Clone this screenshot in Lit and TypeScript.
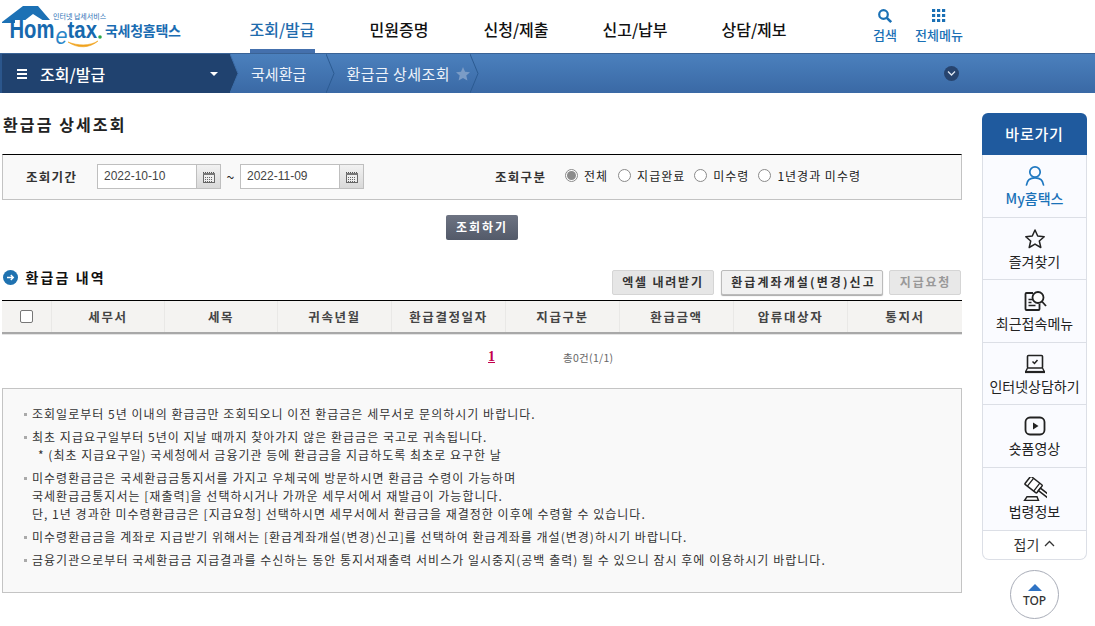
import { LitElement, html, css, svg } from "lit";
import { customElement } from "lit/decorators.js";

const calIcon = html`<svg width="14" height="14" viewBox="0 0 14 14"><path d="M1 2.500h12" stroke="#555" stroke-dasharray="1 1" fill="none"/><rect x="1.500" y="3.500" width="11" height="9" fill="#eee" stroke="#666"/><rect x="1" y="3" width="12" height="2" fill="#777"/><path d="M3 7.500h8M3 9.500h8M3 11.500h8" stroke="#666" stroke-dasharray="1 1" fill="none"/></svg>`;

const icons: Record<string, unknown> = {
  user: svg`<circle cx="12" cy="8" r="5.200" fill="none" stroke="#1f78c1" stroke-width="1.700"/><path d="M3.500 21c.5-5 4-7.200 8.500-7.200s8 2.200 8.500 7.200" fill="none" stroke="#1f78c1" stroke-width="1.700" stroke-linecap="round"/>`,
  star: svg`<path d="M12 3l2.700 6 6.500.7-4.900 4.300 1.500 6.500L12 17.100 6.200 20.500l1.500-6.500L2.800 9.700 9.300 9z" fill="none" stroke="#222" stroke-width="1.500" stroke-linejoin="round"/>`,
  recent: svg`<path d="M10 4H3.500a1 1 0 0 0-1 1v15a1 1 0 0 0 1 1h12a1 1 0 0 0 1-1v-5" fill="none" stroke="#222" stroke-width="1.800"/><path d="M5.500 10.500h4.500M5.500 13.500h3M5.500 16.500h7" stroke="#222" stroke-width="1.600"/><circle cx="15" cy="8.500" r="5.500" fill="#fff" stroke="#222" stroke-width="1.800"/><path d="M19 12.500l4 4.500" stroke="#222" stroke-width="1.800"/>`,
  laptop: svg`<rect x="4.500" y="3.500" width="15" height="12.500" rx="1" fill="none" stroke="#222" stroke-width="1.600"/><path d="M2 20h20" stroke="#222" stroke-width="2.200"/><path d="M4.500 16L2.500 20M19.500 16L21.500 20" stroke="#222" stroke-width="1.400"/><path d="M9.500 9.500l2 2 3-3.500" fill="none" stroke="#222" stroke-width="1.500"/>`,
  play: svg`<rect x="2.500" y="3.500" width="19" height="17" rx="4.500" fill="none" stroke="#222" stroke-width="1.800"/><path d="M10 8.500l5.500 3.500-5.500 3.500z" fill="#222"/>`,
  gavel: svg`<g transform="rotate(38 11 8)"><rect x="3" y="3" width="15" height="10" rx="1" fill="#fff" stroke="#222" stroke-width="1.500"/><path d="M6.500 3v10M14.500 3v10" stroke="#222" stroke-width="1.300"/><path d="M18 6.500h12v3.200H18z" fill="#fff" stroke="#222" stroke-width="1.500"/></g><path d="M1.500 23.500h14l-1.500-3.800H4z" fill="#fff" stroke="#222" stroke-width="1.500"/>`,
};

@customElement("app-root")
export class AppRoot extends LitElement {
  static styles = css`
    :host { display: block; width: 1095px; height: 626px; overflow: hidden; background: #fff; color: #222;
      font-family: "Noto Sans CJK KR", "Liberation Sans", sans-serif; font-size: 12px; }
    * { box-sizing: border-box; }
    .head { display: flex; height: 53px; align-items: stretch; }
    .logo { width: 223.500px; flex: none; }
    .logo svg { display: block; }
    .l-en { font-family: "Liberation Sans", sans-serif; font-weight: 700; fill: #1769ae; }
    .l-e { font-family: "Liberation Sans", sans-serif; font-style: italic; fill: #2b86c8; }
    .l-small { font-size: 7px; fill: #2a6fb5; font-family: "Noto Sans CJK KR", sans-serif; }
    .l-ko { font-size: 14px; font-weight: 700; fill: #1a6cb2; font-family: "Noto Sans CJK KR", sans-serif; }
    .nav { display: flex; width: 623.500px; flex: none; }
    .nav a { width: 117px; display: flex; align-items: flex-start; justify-content: center; padding-top: 16px; font-size: 16px; line-height: 26px; font-weight: 500; color: #111; position: relative; }
    .nav a.on { color: #1f6cad; }
    .nav a.on::after { content: ""; position: absolute; left: 26px; width: 65px; bottom: 0; height: 4px; background: #4470ad; }
    .nav a.wide { margin-left: 2px; }
    .tools { display: flex; }
    .tool { display: flex; flex-direction: column; align-items: center; color: #1a70b5; font-size: 13px; font-weight: 500; line-height: 18px; padding-top: 8px; }
    .tool svg { display: block; height: 16px; margin-bottom: 2px; }
    .t1 { width: 24px; margin-left: 26px; }
    .t2 { width: 48px; margin-left: 18px; }
    .crumb { height: 40px; display: flex; align-items: center; background: linear-gradient(#4b80bd, #3a69a5); color: #fff; border-top: 1px solid #3a6396; position: relative; }
    .c-main { width: 230px; height: 39px; background: #20426f; border-left: 2px solid #2b568c; display: flex; align-items: center; padding-left: 15px; font-size: 16px; font-weight: 500; position: relative; flex: none; }
    .ham { width: 10px; height: 10px; border-top: 2px solid #fff; border-bottom: 2px solid #fff; position: relative; margin-right: 13px; }
    .ham::after { content: ""; position: absolute; left: 0; right: 0; top: 2px; height: 2px; background: #fff; }
    .caret { position: absolute; left: 208px; top: 18px; width: 0; height: 0; border: 4px solid transparent; border-top: 4px solid #fff; border-bottom: 0; }
    .chev { position: absolute; top: 0; width: 9px; height: 39px; }
    .c-item { font-size: 15px; color: #eef3fa; line-height: 20px; flex: none; letter-spacing: .05px; }
    .c1 { margin-left: 21px; }
    .c2 { margin-left: 40px; letter-spacing: .45px; }
    .c-star { margin-left: 6px; display: block; }
    .c-down { position: absolute; left: 944px; top: 12px; width: 15px; height: 15px; border-radius: 50%; background: #27446e; display: flex; align-items: center; justify-content: center; }
    .body { display: flex; padding: 0 0 0 2px; gap: 20px; }
    main { width: 960px; flex: none; padding-top: 20px; }
    h1 { margin: 0; padding-left: 1px; font-size: 16px; line-height: 22px; font-weight: 700; letter-spacing: 2.100px; color: #222; }
    .search { margin-top: 19px; height: 46px; background: #f9f9f9; border: 1px solid #c3c3c3; border-top: 1px solid #000; display: flex; align-items: center; padding: 0 0 1px 23px; position: relative; }
    .lbl { font-weight: 700; font-size: 12.500px; letter-spacing: 1.300px; color: #333; width: 71px; flex: none; }
    .date { display: flex; height: 25px; flex: none; }
    .date .v { width: 99px; background: #fff; border: 1px solid #bfbfbf; border-right: 0; padding-left: 6px; line-height: 22px; font-family: "Liberation Sans", sans-serif; color: #444; }
    .date .b { width: 25px; border: 1px solid #bfbfbf; background: linear-gradient(#f2f2f2, #d9d9d9); display: flex; align-items: center; justify-content: center; }
    .tilde { width: 19px; text-align: center; font-size: 14px; flex: none; }
    .l2 { margin-left: 131px; }
    .radio { display: flex; align-items: center; margin-left: 0; color: #222; font-size: 12px; letter-spacing: 1px; flex: none; line-height: 18px; margin-top: -2px; }
    .radio i { width: 13px; height: 13px; border: 1px solid #8a8a8a; border-radius: 50%; background: #fff; margin-right: 6px; display: flex; align-items: center; justify-content: center; flex: none; }
    .radio i.on::after { content: ""; width: 9px; height: 9px; border-radius: 50%; background: #8b8b8b; }
    .btnrow { margin-top: 15px; display: flex; justify-content: center; }
    .go { width: 72px; height: 25px; background: linear-gradient(#6d7382, #535a69); color: #fff; font-weight: 700; font-size: 12px; letter-spacing: 1.900px; border-radius: 2px; text-align: center; line-height: 23px; }
    .sec { margin-top: 30px; display: flex; justify-content: space-between; height: 25px; }
    .sec-t { display: flex; align-items: center; height: 14px; font-size: 14px; line-height: 14px; font-weight: 700; letter-spacing: 2.100px; color: #111; }
    .sec-t svg { margin-right: 8px; margin-left: .5px; display: block; }
    .btns { display: flex; gap: 6px; padding-right: 1px; }
    .bt { height: 25px; border: 1px solid #d5d5d5; background: #e6e6e6; font-weight: 700; font-size: 12px; letter-spacing: 1.800px; color: #333; text-align: center; line-height: 22px; border-radius: 2px; }
    .bt.a { width: 102px; margin-right: 1px; }
    .bt.b { width: 162px; background: #f1f1f1; border-color: #bbb; box-shadow: 0 1px 1px #aaa; letter-spacing: 2.100px; padding-left: 3px; }
    .bt.c { width: 72px; color: #999; background: #e8e8e8; letter-spacing: 1.800px; padding-left: 1px; }
    .thead { margin-top: 5px; height: 34px; display: grid; grid-template-columns: 49px 113px 113px 114px 114px 114px 114px 114px 1fr; background: #f4f3f1; border-top: 1px solid #000; border-bottom: 2px solid #a8a8a8; box-shadow: 0 1px 0 #e4e4e4; }
    .thead div { display: flex; align-items: center; justify-content: center; font-weight: 700; font-size: 12.500px; letter-spacing: 1.600px; color: #444; border-left: 1px solid #e9e8e6; }
    .thead div:first-child { border-left: 0; }
    .cb { width: 13px; height: 13px; border: 1px solid #777; background: #fff; border-radius: 2px; }
    .pager { height: 46px; margin-bottom: 8px; display: grid; grid-template-columns: 493px auto; align-items: center; }
    .pg { font-family: "Liberation Serif", serif; font-weight: 700; font-size: 14px; color: #c3004d; text-decoration: underline; justify-self: end; }
    .tot { font-size: 10.500px; letter-spacing: .3px; color: #666; margin-left: 68px; }
    .notes { height: 205px; background: #f9f9f9; border: 1px solid #c4c4c4; padding: 16px 0 0 21px; margin: 0; list-style: none; }
    .notes li { position: relative; padding-left: 8px; line-height: 18px; margin-bottom: 5px; font-size: 12px; letter-spacing: 1.020px; color: #333; white-space: nowrap; }
    .notes li::before { content: ""; position: absolute; left: 0; top: 8px; width: 3px; height: 3px; background: #aaa; }
    .notes .ind { padding-left: 6px; display: block; }
    aside { width: 105px; flex: none; padding-top: 20px; }
    .s-h { height: 42px; background: #1f5a9e; color: #fff; font-size: 15px; font-weight: 500; letter-spacing: .8px; border-radius: 6px 6px 0 0; text-align: center; line-height: 42px; }
    .s-i { height: 62.600px; background: #fafbff; border: 1px solid #dcdfe6; border-top: 0; display: flex; flex-direction: column; align-items: center; padding-top: 9px; font-size: 14px; line-height: 19px; color: #222; }
    .s-i svg { display: block; margin-bottom: 1px; }
    .s-i.my { color: #1a72b8; font-weight: 500; }
    .s-f { height: 29px; background: #fff; border: 1px solid #dcdfe6; border-top: 0; border-radius: 0 0 7px 7px; display: flex; align-items: center; justify-content: center; gap: 5px; font-size: 14px; line-height: 18px; padding-bottom: 2px; color: #333; }
    .top { width: 49px; height: 49px; border: 1px solid #a9adb8; border-radius: 50%; margin: 10px 0 0 28px; display: flex; flex-direction: column; align-items: center; padding-top: 13px; font-size: 12px; line-height: 14px; font-weight: 500; color: #333; font-family: "Noto Sans", sans-serif; }
    .tri { width: 0; height: 0; border: 7px solid transparent; border-top: 0; border-bottom: 7px solid #2f73c4; margin-bottom: 3px; }
  `;

  private chev(x: number, fill: string, stroke: string) {
    return html`<svg class="chev" style="left:${x}px" viewBox="0 0 9 39"><path d="M0 0L8 19.500 0 39" fill="${fill}" stroke="${stroke}" stroke-width="1"/></svg>`;
  }

  render() {
    const cols = ["세무서", "세목", "귀속년월", "환급결정일자", "지급구분", "환급금액", "압류대상자", "통지서"];
    const side = [
      ["user", "My홈택스", "my"], ["star", "즐겨찾기", ""], ["recent", "최근접속메뉴", ""],
      ["laptop", "인터넷상담하기", ""], ["play", "숏폼영상", ""], ["gavel", "법령정보", ""],
    ];
    return html`
      <div class="head">
        <div class="logo">
          <svg width="223" height="53" viewBox="0 0 223 53">
            <path d="M2 22L23 6h15l12 14H15v3H2z" fill="#1c71b5"/>
            <path d="M24 21L33 14 44 21z" fill="#fff"/>
            <text x="53" y="19" class="l-small">인터넷 납세서비스</text>
            <text x="9.500" y="38" class="l-en" font-size="25" textLength="45" lengthAdjust="spacingAndGlyphs">Hom</text>
            <text x="55.500" y="44" class="l-e" font-size="24" textLength="12" lengthAdjust="spacingAndGlyphs">e</text>
            <text x="67.500" y="38" class="l-en" font-size="23" textLength="29.500" lengthAdjust="spacingAndGlyphs">tax</text>
            <circle cx="100" cy="37" r="1.800" fill="#2aa84a"/>
            <path d="M68 42C78 49 90 48 98 41C90 46 78 46 68 42z" fill="#f0a21d" stroke="#f0a21d" stroke-width=".6"/>
            <text x="105" y="36" class="l-ko" textLength="76">국세청홈택스</text>
          </svg>
        </div>
        <div class="nav">
          <a class="on">조회/발급</a><a>민원증명</a><a>신청/제출</a><a class="wide">신고/납부</a><a class="wide">상담/제보</a>
        </div>
        <div class="tools">
          <div class="tool t1">
            <svg width="16" height="16" viewBox="0 0 16 16"><circle cx="6.500" cy="6.500" r="4.300" fill="none" stroke="#1a70b5" stroke-width="2.200"/><path d="M9.800 9.800L14.200 14.200" stroke="#1a70b5" stroke-width="2.600"/></svg>
            검색
          </div>
          <div class="tool t2">
            <svg width="14" height="16" viewBox="0 0 14 16"><path d="M0 1h3.200v3H0zM5 1h3.200v3H5zM10 1h3.200v3H10zM0 6h3.200v3H0zM5 6h3.200v3H5zM10 6h3.200v3H10zM0 11h3.200v3H0zM5 11h3.200v3H5zM10 11h3.200v3H10z" fill="#1a70b5"/></svg>
            전체메뉴
          </div>
        </div>
      </div>
      <div class="crumb">
        <div class="c-main"><span class="ham"></span>조회/발급<span class="caret"></span></div>
        ${this.chev(230, "#20426f", "#3d6ea9")}
        <span class="c-item c1">국세환급</span>
        ${this.chev(326, "none", "#2c5b92")}
        <span class="c-item c2">환급금 상세조회</span>
        <svg class="c-star" width="14" height="14" viewBox="0 0 14 14"><path d="M7 0l2.100 4.700 5 .5-3.800 3.300 1.100 5L7 11l-4.400 2.500 1.100-5L0 5.200l5-.5z" fill="#7b9cc6"/></svg>
        ${this.chev(470, "none", "#2c5b92")}
        <span class="c-down"><svg width="9" height="7" viewBox="0 0 9 7"><path d="M1 1.500l3.500 3.500L8 1.500" fill="none" stroke="#dfe7f1" stroke-width="1.300"/></svg></span>
      </div>
      <div class="body">
        <main>
          <h1>환급금 상세조회</h1>
          <div class="search">
            <span class="lbl">조회기간</span>
            <div class="date"><div class="v">2022-10-10</div><div class="b">${calIcon}</div></div>
            <span class="tilde">~</span>
            <div class="date"><div class="v">2022-11-09</div><div class="b">${calIcon}</div></div>
            <span class="lbl l2">조회구분</span>
            <label class="radio" style="margin-left:-1px"><i class="on"></i>전체</label>
            <label class="radio" style="margin-left:10px"><i></i>지급완료</label>
            <label class="radio" style="margin-left:9px"><i></i>미수령</label>
            <label class="radio" style="margin-left:9px"><i></i>1년경과 미수령</label>
          </div>
          <div class="btnrow"><div class="go">조회하기</div></div>
          <div class="sec">
            <div class="sec-t">
              <svg width="15" height="15" viewBox="0 0 15 15"><circle cx="7.500" cy="7.500" r="7.500" fill="#1f72b0"/><path d="M4 7.500h6M7.800 5l2.500 2.500L7.800 10" fill="none" stroke="#fff" stroke-width="1.400"/></svg>
              환급금 내역
            </div>
            <div class="btns">
              <div class="bt a">엑셀 내려받기</div><div class="bt b">환급계좌개설(변경)신고</div><div class="bt c">지급요청</div>
            </div>
          </div>
          <div class="thead">
            <div><span class="cb"></span></div>
            ${cols.map((c) => html`<div>${c}</div>`)}
          </div>
          <div class="pager"><span class="pg">1</span><span class="tot">총0건(1/1)</span></div>
          <ul class="notes">
            <li>조회일로부터 5년 이내의 환급금만 조회되오니 이전 환급금은 세무서로 문의하시기 바랍니다.</li>
            <li>최초 지급요구일부터 5년이 지날 때까지 찾아가지 않은 환급금은 국고로 귀속됩니다.<span class="ind">* (최초 지급요구일) 국세청에서 금융기관 등에 환급금을 지급하도록 최초로 요구한 날</span></li>
            <li>미수령환급금은 국세환급금통지서를 가지고 우체국에 방문하시면 환급금 수령이 가능하며<br />국세환급금통지서는 [재출력]을 선택하시거나 가까운 세무서에서 재발급이 가능합니다.<br />단, 1년 경과한 미수령환급금은 [지급요청] 선택하시면 세무서에서 환급금을 재결정한 이후에 수령할 수 있습니다.</li>
            <li>미수령환급금을 계좌로 지급받기 위해서는 [환급계좌개설(변경)신고]를 선택하여 환급계좌를 개설(변경)하시기 바랍니다.</li>
            <li>금융기관으로부터 국세환급금 지급결과를 수신하는 동안 통지서재출력 서비스가 일시중지(공백 출력) 될 수 있으니 잠시 후에 이용하시기 바랍니다.</li>
          </ul>
        </main>
        <aside>
          <div class="s-h">바로가기</div>
          ${side.map(([ic, t, c]) => html`<div class="s-i ${c}"><svg width="24" height="24" viewBox="0 0 24 24">${icons[ic]}</svg>${t}</div>`)}
          <div class="s-f">접기 <svg width="11" height="7" viewBox="0 0 11 7"><path d="M1 6l4.500-4.500L10 6" fill="none" stroke="#333" stroke-width="1.300"/></svg></div>
          <div class="top"><span class="tri"></span>TOP</div>
        </aside>
      </div>
    `;
  }
}
